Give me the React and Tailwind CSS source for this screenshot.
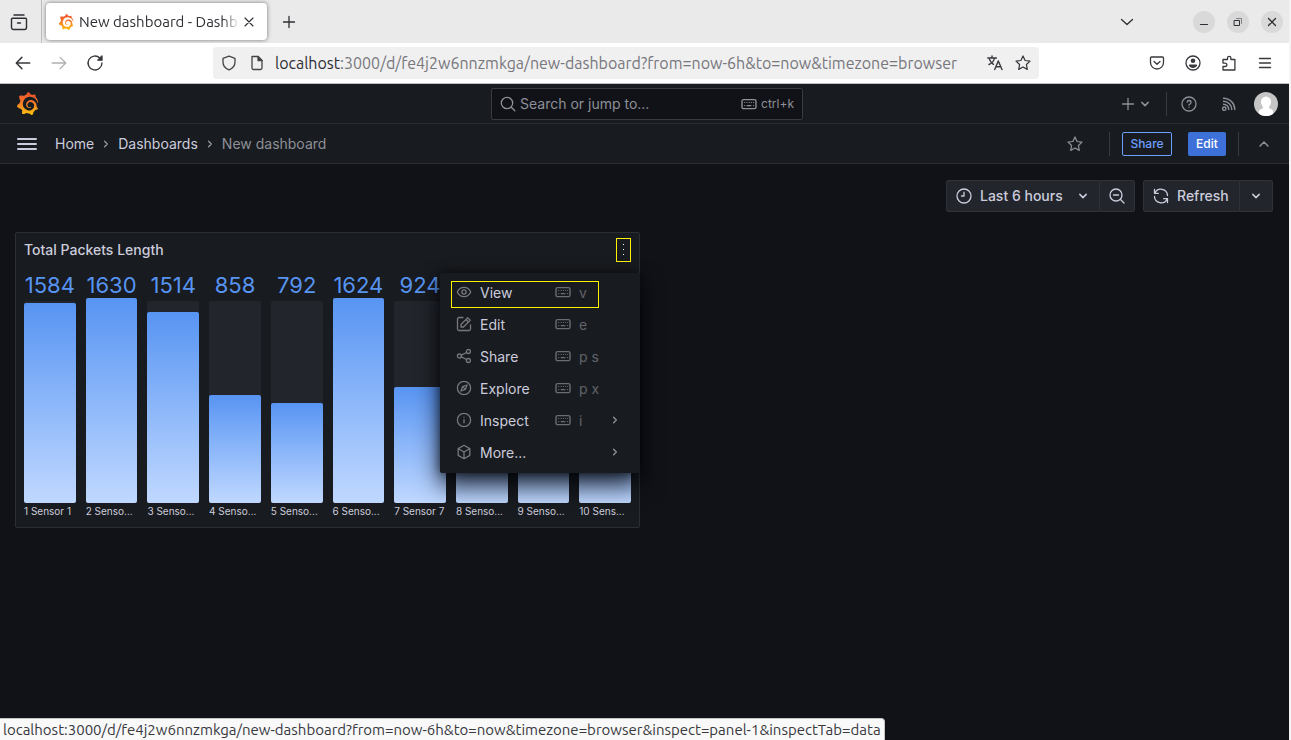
import React from "react";
import { SiGrafana } from "react-icons/si";

const inter = "font-['Inter',sans-serif]";
const system = "font-['Ubuntu','Noto_Sans',sans-serif]";

function Svg({ size = "size-4", box = 16, w = 1.3, className = "", children }) {
  return (
    <svg
      viewBox={`0 0 ${box} ${box}`}
      className={`${size} shrink-0 ${className}`}
      fill="none"
      stroke="currentColor"
      strokeWidth={w}
      strokeLinecap="round"
      strokeLinejoin="round"
      aria-hidden="true"
    >
      {children}
    </svg>
  );
}

function GrafanaLogo({ id, className }) {
  return (
    <>
      <svg className="absolute size-0" aria-hidden="true">
        <defs>
          <linearGradient id={id} x1="0" y1="0" x2="0" y2="1">
            <stop offset="0" stopColor="#f04e2b" />
            <stop offset="0.45" stopColor="#f4772a" />
            <stop offset="1" stopColor="#fcc50d" />
          </linearGradient>
        </defs>
      </svg>
      <SiGrafana className={className} fill={`url(#${id})`} aria-hidden="true" />
    </>
  );
}

const Keyboard = ({ className }) => (
  <Svg w={1.4} className={className}>
    <rect x="1" y="3.6" width="14" height="9" rx="1.6" />
    <path d="M3.7 6.5h.1M6 6.5h.1M8.2 6.5h.1M10.4 6.5h.1M12.5 6.5h.1M3.7 9.6h.1M6.1 9.6h3.8M12.5 9.6h.1" strokeWidth="1.2" />
  </Svg>
);
const Chevron = ({ dir = "down", size = "size-4", w = 1.5, className = "" }) => (
  <Svg size={size} w={w} className={className}>
    <path d={{ down: "M4.8 6.4 8 9.6l3.2-3.2", up: "M4 10l4-4 4 4", right: "M6.6 5.3 9.3 8l-2.7 2.7" }[dir]} />
  </Svg>
);
const Star = ({ size }) => (
  <Svg size={size} w={1.25}>
    <path d="m8 1 2.1 4.5 4.9.6-3.6 3.4.9 4.9L8 12l-4.3 2.4.9-4.9L1 6.1l4.9-.6z" />
  </Svg>
);

const menuItems = [
  {
    label: "View", keys: "v",
    icon: <><path d="M1.3 8C2.6 5.1 5.1 3.4 8 3.4s5.4 1.7 6.7 4.6c-1.3 2.9-3.8 4.6-6.7 4.6S2.6 10.9 1.3 8z" /><circle cx="8" cy="8" r="2.1" /></>,
  },
  {
    label: "Edit", keys: "e",
    icon: <><path d="M7 1.5H3A1.5 1.5 0 0 0 1.5 3v10A1.5 1.5 0 0 0 3 14.5h10a1.5 1.5 0 0 0 1.5-1.5V9" /><path d="M5 8.5V11h2.5l6.7-6.7-2.5-2.5zM10 3.5 12.5 6" /></>,
  },
  {
    label: "Share", keys: "p s",
    icon: <><circle cx="3.4" cy="8" r="2" /><circle cx="12.4" cy="3.5" r="2" /><circle cx="12.4" cy="12.5" r="2" /><path d="m5.3 7.2 5.3-2.7M5.3 8.8l5.3 2.7" /></>,
  },
  {
    label: "Explore", keys: "p x",
    icon: <><circle cx="8" cy="8" r="6.6" /><path d="m11 5-1.5 4.3L5 11l1.5-4.3zM7.6 7.6l.8.8" /></>,
  },
  {
    label: "Inspect", keys: "i", sub: true,
    icon: <><circle cx="8" cy="8" r="6.6" /><path d="M8 7.6v3.2M8 5.2v.1" /></>,
  },
  {
    label: "More...", sub: true,
    icon: <path d="m8 1.3 5.8 3.3v6.8L8 14.7l-5.8-3.3V4.6zM2.4 4.8 8 8l5.6-3.2M8 8v6.5" />,
  },
];

const bars = [
  { value: 1584, label: "1 Sensor 1", height: 200 },
  { value: 1630, label: "2 Senso...", height: 205 },
  { value: 1514, label: "3 Senso...", height: 191 },
  { value: 858, label: "4 Senso...", height: 108 },
  { value: 792, label: "5 Senso...", height: 100 },
  { value: 1624, label: "6 Senso...", height: 205 },
  { value: 924, label: "7 Sensor 7", height: 116 },
  { value: 880, label: "8 Senso...", height: 111 },
  { value: 910, label: "9 Senso...", height: 115 },
  { value: 846, label: "10 Sens...", height: 107 },
];

const windowButton = "flex size-[22px] items-center justify-center rounded-full bg-[#d9d9d9]";

function TabStrip() {
  return (
    <div className="flex h-[43px] items-stretch bg-[#eaeaea] text-[#2e2e34]">
      <button aria-label="Recent browsing" className="flex w-[41px] items-center justify-center pr-1">
        <Svg size="size-[18px]" box={18} w={1.4}>
          <path d="M4 2h10M2.5 5.2h13a1 1 0 0 1 1 1v8.3a2 2 0 0 1-2 2h-11a2 2 0 0 1-2-2V6.2a1 1 0 0 1 1-1zM7.5 10h3" />
        </Svg>
      </button>
      <div className="w-px bg-[#bdbdbd]" />
      <div className="my-[3px] ml-1 flex w-[221px] items-center rounded bg-white pl-3 pr-3 shadow-[0_0_4px_rgba(0,0,0,0.5)]">
        <GrafanaLogo id="tab-flame" className="size-4 shrink-0" />
        <span className="ml-[5px] h-5 flex-1 overflow-hidden whitespace-nowrap text-[15px] leading-5 [mask-image:linear-gradient(to_right,#000_90%,transparent)]">
          New dashboard - Dashboards
        </span>
        <button aria-label="Close tab" className="ml-1 flex size-3 items-center justify-center">
          <Svg size="size-3" box={12} w={1.1}><path d="m2 2 8 8M10 2l-8 8" /></Svg>
        </button>
      </div>
      <button aria-label="New tab" className="ml-3 flex w-5 items-center justify-center">
        <Svg w={1.3}><path d="M8 2.5v11M2.5 8h11" /></Svg>
      </button>
      <div className="ml-auto flex items-center gap-3 pr-[6px]">
        <button aria-label="List all tabs" className="mr-11 flex size-5 items-center justify-center">
          <Svg w={1.3}><path d="m2.5 5.5 5.5 5 5.5-5" /></Svg>
        </button>
        <button aria-label="Minimize" className={windowButton}>
          <Svg w={1.2}><path d="M4.5 10.5h7" /></Svg>
        </button>
        <button aria-label="Restore" className={windowButton}>
          <Svg w={1}><path d="M4.5 6.5h5v5h-5z" /><path d="M6.5 4.5h5v5" opacity="0.5" /></Svg>
        </button>
        <button aria-label="Close window" className={windowButton}>
          <Svg w={1.3}><path d="m4.5 4.5 7 7M11.5 4.5l-7 7" /></Svg>
        </button>
      </div>
    </div>
  );
}

function AddressRow() {
  return (
    <div className="flex h-[41px] items-center border-b border-[#bfbfc3] bg-white pl-[14px] pr-4 text-[#38383d]">
      <button aria-label="Back"><Svg size="size-[18px]" w={1.3}><path d="M2 8h12M7 3 2 8l5 5" /></Svg></button>
      <button aria-label="Forward" className="ml-[18px] text-[#b0b0b3]"><Svg size="size-[18px]" w={1.2}><path d="M2 8h12M9 3l5 5-5 5" /></Svg></button>
      <button aria-label="Reload" className="ml-[18px]">
        <Svg size="size-[18px]" w={1.2}><path d="M14.2 8A6.2 6.2 0 1 1 12.3 3.5L13.8 5" /><path d="M14.2 1.8V5.5h-3.7z" fill="currentColor" /></Svg>
      </button>
      <div className="ml-[109px] flex h-8 w-[826px] min-w-0 items-center rounded bg-[#f0f0f1] px-2">
        <Svg className="text-[#444]"><path d="M8 1.2 14 3.3V7c0 3.8-2.2 6.5-6 7.8C4.2 13.5 2 10.8 2 7V3.3z" /></Svg>
        <Svg className="ml-3 text-[#444]"><path d="M3 1.5h6l4 4v7.5a1.5 1.5 0 0 1-1.5 1.5h-7A1.5 1.5 0 0 1 3 13z" /><path d="M9 1.5v4h4z" fill="currentColor" /></Svg>
        <div className="ml-[10px] min-w-0 flex-1 truncate text-base leading-5 text-[#77777c]">
          <span className="text-[#2e2e34]">localhost</span>:3000/d/fe4j2w6nnzmkga/new-dashboard?from=now-6h&amp;to=now&amp;timezone=browser
        </div>
        <button aria-label="Translate page">
          <Svg w={1.4}><path d="M.8 3h8.6M5 1v2M2 9.5C5 8.3 7 6 7.5 3M2.5 4.5C3.3 6.5 4.5 8 6.5 9.3M7.7 14.5 11.3 6l3.7 8.5M9 11.8h4.7" /></Svg>
        </button>
        <button aria-label="Bookmark page" className="ml-3"><Star /></button>
      </div>
      <div className="ml-auto flex items-center gap-5">
        <button aria-label="Pocket"><Svg w={1.3}><path d="M2.5 2h11a1 1 0 0 1 1 1v4.5a6.5 6.5 0 0 1-13 0V3a1 1 0 0 1 1-1zM5 6.5l3 2.8 3-2.8" /></Svg></button>
        <button aria-label="Account"><Svg w={1.3}><circle cx="8" cy="8" r="7" /><circle cx="8" cy="5.7" r="2.3" fill="currentColor" stroke="none" /><path d="M3.8 10.5a1 1 0 0 1 1-1h6.4a1 1 0 0 1 1 1C11.3 12 9.8 13 8 13s-3.3-1-4.2-2.5z" fill="currentColor" stroke="none" /></Svg></button>
        <button aria-label="Extensions"><Svg w={1.3}><path d="M2 6V4.5h4.5V3a1.7 1.7 0 0 1 3.4 0v1.5h4V15H2v-3.5h2.2a1.7 1.7 0 0 0 0-3.4H2V6z" /></Svg></button>
        <button aria-label="Application menu"><Svg w={1.3}><path d="M2.5 3.5h11M2.5 8h11M2.5 12.5h11" /></Svg></button>
      </div>
    </div>
  );
}

function GrafanaHeader() {
  return (
    <header className="bg-[#181b1f] text-[#8e8f98]">
      <div className="flex h-10 items-center border-b border-[#2c2e33] pl-4 pr-[11px]">
        <div className="flex flex-1">
          <a href="#home" aria-label="Grafana"><GrafanaLogo id="header-flame" className="size-[23px]" /></a>
        </div>
        <button className="flex h-8 w-[312px] items-center rounded-[2px] border border-[#3a3b40] bg-[#111217] px-2 text-sm">
          <Svg><circle cx="7" cy="7" r="5.7" /><path d="m11.3 11.3 3.5 3.5" /></Svg>
          <span className="ml-1">Search or jump to...</span>
          <Keyboard className="ml-auto" />
          <span className="ml-1 text-xs">ctrl+k</span>
        </button>
        <div className="flex flex-1 items-center justify-end">
          <button aria-label="New" className="flex items-center">
            <Svg><path d="M8 2.5v11M2.5 8h11" /></Svg>
            <span className="ml-px"><Chevron /></span>
          </button>
          <div className="ml-[13px] h-6 w-px bg-[#3a3b40]" />
          <button aria-label="Help" className="ml-[14px]">
            <Svg><circle cx="8" cy="8" r="7" /><path d="M6.2 6.2A1.9 1.9 0 1 1 8 8.3v.8M8 11.2v.1" /></Svg>
          </button>
          <button aria-label="News" className="ml-6">
            <Svg w={1.4}><circle cx="3.3" cy="12.7" r="1.7" /><path d="M2.5 8.2a5.3 5.3 0 0 1 5.3 5.3M2.5 5.2a8.3 8.3 0 0 1 8.3 8.3M2.5 2.2a11.3 11.3 0 0 1 11.3 11.3" /></Svg>
          </button>
          <button aria-label="Profile" className="ml-[17px]">
            <svg viewBox="0 0 24 24" className="size-6 rounded-full" aria-hidden="true">
              <rect width="24" height="24" fill="#c5c5c5" />
              <path d="M12 4.5a5 5 0 0 1 5 5.3c0 2-.8 3.6-1.8 4.8v1.7l3.8 2 1 5.7H4l1-5.7 3.8-2v-1.7C7.8 13.4 7 11.8 7 9.8a5 5 0 0 1 5-5.3z" fill="#fff" />
            </svg>
          </button>
        </div>
      </div>
      <div className="flex h-10 items-center border-b border-[#2c2e33] pl-4 pr-[17px]">
        <button aria-label="Open menu" className="flex w-[22px] justify-center text-[#ccccdc]">
          <Svg size="size-[22px]" box={22} w={2}><path d="M2 6h18M2 11h18M2 16h18" /></Svg>
        </button>
        <nav aria-label="Breadcrumbs" className="ml-[17px] flex items-center gap-1 text-sm">
          <a href="#home" className="text-[#ccccdc]">Home</a>
          <Chevron dir="right" />
          <a href="#dashboards" className="text-[#ccccdc]">Dashboards</a>
          <Chevron dir="right" />
          <span>New dashboard</span>
        </nav>
        <div className="ml-auto flex items-center">
          <button aria-label="Mark as favorite"><Star /></button>
          <div className="ml-[26px] h-6 w-px bg-[#3a3b40]" />
          <button className="ml-3 h-6 w-[50px] rounded-[2px] border border-[#6e9fff] text-xs font-medium text-[#6e9fff]">Share</button>
          <button className="ml-4 h-6 w-[38px] rounded-[2px] bg-[#3d71d9] text-xs font-medium text-white">Edit</button>
          <div className="ml-3 h-6 w-px bg-[#3a3b40]" />
          <button aria-label="Collapse toolbar" className="ml-[17px]"><Chevron dir="up" /></button>
        </div>
      </div>
    </header>
  );
}

const toolButton = "flex h-8 items-center border border-[#303136] bg-[#22252b] text-sm font-medium text-[#ccccdc]";

function TimeControls() {
  return (
    <div className="flex justify-end gap-2">
      <div className="flex">
        <button className={`${toolButton} w-[154px] rounded-l-[2px] px-2`}>
          <Svg className="mx-px"><circle cx="8" cy="8" r="7" /><path d="M8 4.2V8H5.5" /></Svg>
          <span className="ml-[7px]">Last 6 hours</span>
          <Chevron className="ml-auto" />
        </button>
        <button aria-label="Zoom out" className={`${toolButton} w-[35px] justify-center rounded-r-[2px] border-l-0`}>
          <Svg><circle cx="7" cy="7" r="6" /><path d="m11.5 11.5 3.5 3.5M4.5 7h5" /></Svg>
        </button>
      </div>
      <div className="flex">
        <button className={`${toolButton} w-[97px] rounded-l-[2px] px-2`}>
          <Svg className="mx-px"><path d="M1.5 1.5v3.8h3.8M14.5 14.5v-3.8h-3.8M1.9 5.1A6.6 6.6 0 0 1 14.5 7.5M14.1 10.9A6.6 6.6 0 0 1 1.5 8.5" /></Svg>
          <span className="ml-[7px]">Refresh</span>
        </button>
        <button aria-label="Refresh interval" className={`${toolButton} w-[33px] justify-center rounded-r-[2px] border-l-0`}>
          <Chevron />
        </button>
      </div>
    </div>
  );
}

function PanelMenu() {
  return (
    <div role="menu" className="absolute -right-px top-10 z-10 w-[200px] rounded-[2px] bg-[#181b1f] py-1 shadow-[0_12px_24px_rgba(1,4,9,0.85),0_0_10px_rgba(1,4,9,0.5)]">
      {menuItems.map((item) => (
        <button key={item.label} role="menuitem" className="flex h-8 w-full items-center pl-4 pr-[17px] text-sm text-[#ccccdc]">
          <Svg w={1.3} className="mb-[2px] text-[#77787f]">{item.icon}</Svg>
          <span className="ml-2 w-[75px] text-left">{item.label}</span>
          {item.keys && (
            <>
              <Keyboard className="mb-[2px] text-[#6c6d74]" />
              <span className="ml-2 text-[#62636a]">{item.keys}</span>
            </>
          )}
          {item.sub && <Chevron dir="right" w={1.4} className="mb-[2px] ml-auto text-[#8e8f98]" />}
        </button>
      ))}
      <div className="pointer-events-none absolute left-[11px] top-2 h-[27px] w-[148px] border border-[#fff200]" />
    </div>
  );
}

function Panel() {
  return (
    <section className="relative rounded-[2px] border border-[#2c2e33] bg-[#181b1f] px-2 pb-2">
      <div className="flex h-[34px] items-center justify-between">
        <h2 className="text-sm font-medium text-[#ccccdc]">Total Packets Length</h2>
        <button aria-label="Panel menu" className="flex h-6 w-[15px] items-center justify-center border border-[#fff200] text-white">
          <svg viewBox="0 0 3 12" className="h-3 w-[3px]" fill="currentColor" aria-hidden="true">
            <path d="M1 0h1v1H1zM1 5h1v1H1zM1 10h1v1H1z" />
          </svg>
        </button>
      </div>
      <div className="grid grid-cols-10 gap-[10px]">
        {bars.map((bar) => (
          <div key={bar.label} className="flex min-w-0 flex-col items-center">
            <span className="flex h-[34px] items-center pt-[2px] text-[22px] leading-7 text-[#5794f2]">{bar.value}</span>
            <div className="flex h-[202px] w-full items-end rounded-[2px] bg-[#22252b]">
              <div
                className="w-full rounded-[2px] bg-linear-to-b from-[#5794f2] to-[#c0d8ff]"
                style={{ height: bar.height }}
              />
            </div>
            <span className="self-start whitespace-nowrap text-[10px] leading-4 text-[#ccccdc]">{bar.label}</span>
          </div>
        ))}
      </div>
      <PanelMenu />
    </section>
  );
}

export default function App() {
  return (
    <div className={`flex min-h-screen flex-col bg-[#f4f4f4] pr-[2px] ${system}`}>
      <TabStrip />
      <AddressRow />
      <div className={`flex flex-1 flex-col bg-[#111217] ${inter}`}>
        <GrafanaHeader />
        <main className="flex flex-col gap-5 py-4 pl-[15px] pr-4">
          <TimeControls />
          <div className="grid grid-cols-2 items-start gap-2">
            <Panel />
          </div>
        </main>
      </div>
      <div className="fixed bottom-0 left-0 z-20 flex h-[22px] items-center whitespace-nowrap rounded-tr border-r border-t border-[#c4c4c4] bg-[#f9f9fa] px-[3px] text-[15px] leading-5 text-[#38383d]">
        localhost:3000/d/fe4j2w6nnzmkga/new-dashboard?from=now-6h&amp;to=now&amp;timezone=browser&amp;inspect=panel-1&amp;inspectTab=data
      </div>
    </div>
  );
}
